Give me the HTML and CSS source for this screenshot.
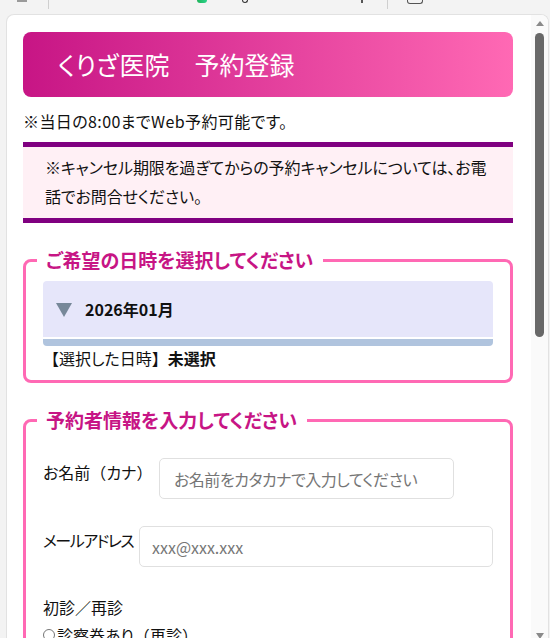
FILE: index.html
```html
<!DOCTYPE html>
<html lang="ja">
<head>
<meta charset="utf-8">
<title>くりざ医院 予約登録</title>
<link rel="stylesheet" href="styles.css">
</head>
<body>
<div class="chrome">
  <span class="frag frag-tab"></span>
  <span class="frag frag-sep1"></span>
  <span class="frag frag-dot"></span>
  <span class="frag frag-txt"></span>
  <span class="frag frag-tick"></span>
  <span class="frag frag-sep2"></span>
  <span class="frag frag-box"></span>
</div>
<div class="panel">
  <main class="content">
    <h1 class="title">くりざ医院　予約登録</h1>
    <p class="lead">※当日の8:00までWeb予約可能です。</p>
    <div class="notice">※キャンセル期限を過ぎてからの予約キャンセルについては、お電話でお問合せください。</div>

    <fieldset class="box">
      <legend>ご希望の日時を選択してください</legend>
      <div class="month"><span class="tri"></span><span class="month-label">2026年01月</span></div>
      <div class="month-foot"></div>
      <p class="selected"><span class="fw">【</span>選択した日時<span class="fw">】</span><strong>未選択</strong></p>
    </fieldset>

    <fieldset class="box">
      <legend>予約者情報を入力してください</legend>
      <div class="row row-name">
        <label class="lbl lbl-name" for="kana">お名前<span class="fw">（</span>カナ<span class="fw">）</span></label>
        <input class="inp inp-name" id="kana" type="text" placeholder="お名前をカタカナで入力してください">
      </div>
      <div class="row row-mail">
        <label class="lbl lbl-mail" for="mail">メールアドレス</label>
        <input class="inp inp-mail" id="mail" type="text" placeholder="xxx@xxx.xxx">
      </div>
      <p class="q">初診／再診</p>
      <label class="radio"><input type="radio" name="visit">診察券あり<span class="fw">（</span>再診<span class="fw">）</span></label>
    </fieldset>
  </main>
  <div class="scrollbar">
    <span class="sb-up"></span>
    <span class="sb-thumb"></span>
    <span class="sb-down"></span>
  </div>
</div>
</body>
</html>
```
FILE: styles.css
```css
html, body {
  margin: 0;
}
body {
  width: 550px;
  height: 638px;
  overflow: hidden;
  background: #f3f3f3;
  font-family: "Noto Sans CJK JP", "Noto Sans", sans-serif;
  font-feature-settings: "palt";
  color: #111;
}
.fw {
  font-feature-settings: normal;
}

/* browser chrome fragments */
.chrome {
  height: 14px;
  position: relative;
}
.frag {
  position: absolute;
  top: 0;
  display: block;
}
.frag-tab { left: 17px; width: 10px; height: 2px; background: #9a9a9a; }
.frag-sep1 { left: 48px; width: 1px; height: 9px; background: #cfcfcf; }
.frag-dot { left: 197px; width: 10px; height: 3px; border-radius: 0 0 5px 5px; background: linear-gradient(to right, #1fb35a, #2bd38a); }
.frag-txt { left: 242px; width: 6px; height: 3px; border-radius: 0 0 3px 3px; border: 1px solid #333; border-top: 0; box-sizing: border-box; }
.frag-tick { left: 361px; width: 2px; height: 3px; background: #555; }
.frag-sep2 { left: 387px; width: 1px; height: 9px; background: #cfcfcf; }
.frag-box { left: 407px; width: 16px; height: 4px; border: 1.5px solid #555; border-top: 0; border-radius: 0 0 3px 3px; box-sizing: border-box; }

.panel {
  margin-left: 6px;
  width: 543px;
  height: 624px;
  box-sizing: border-box;
  background: #fff;
  border: 1px solid #e2e2e2;
  border-bottom: 0;
  border-radius: 8px 8px 0 0;
  display: flex;
  overflow: hidden;
}
.content {
  flex: 1;
  min-width: 0;
  padding: 17px 18px 0 16px;
}

.title {
  margin: 0;
  height: 65px;
  box-sizing: border-box;
  padding-left: 35px;
  display: flex;
  align-items: center;
  border-radius: 8px;
  background: linear-gradient(to right, #c71585, #ff69b4);
  color: #fff;
  font-size: 25px;
  font-weight: 400;
  line-height: 1;
}
.lead {
  margin: 12px 0 9px;
  font-size: 16px;
  line-height: 24px;
  letter-spacing: 0.4px;
}
.notice {
  border-top: 5px solid #800080;
  border-bottom: 5px solid #800080;
  background: #fff0f5;
  padding: 6px 14px 7px 22px;
  font-size: 16px;
  line-height: 29px;
  letter-spacing: -0.1px;
}

.box {
  margin: 25px 0 0;
  min-width: 0;
  border: 3px solid #ff69b4;
  border-radius: 8px;
  padding: 9px 17px 10px;
}
.box legend {
  margin-left: -6px;
  padding: 0 10px 0 9px;
  color: #c71585;
  font-size: 19px;
  font-weight: 700;
  line-height: 24px;
}

.month {
  height: 56px;
  background: #e6e6fa;
  border-radius: 4px 4px 0 0;
  display: flex;
  align-items: center;
  padding-left: 13px;
}
.tri {
  width: 0;
  height: 0;
  border-left: 8px solid transparent;
  border-right: 8px solid transparent;
  border-top: 14px solid #778899;
  margin: 2px 13px 0 0;
}
.month-label {
  font-size: 16px;
  font-weight: 700;
}
.month-foot {
  height: 7px;
  margin-top: 2px;
  background: #b0c4de;
  border-radius: 0 0 4px 4px;
}
.selected {
  margin: 0;
  font-size: 16px;
  line-height: 24px;
}
.selected strong {
  font-weight: 700;
}

.row {
  display: flex;
  align-items: flex-start;
}
.row-name { margin-top: 17px; }
.row-mail { margin-top: 27px; }
.lbl {
  margin-top: 2px;
  font-size: 16px;
  line-height: 24px;
  white-space: nowrap;
}
.lbl-name { width: 101px; }
.lbl-mail { width: 90px; letter-spacing: -1.5px; }
.inp {
  height: 41px;
  box-sizing: border-box;
  border: 1px solid #e0e0e0;
  border-radius: 5px;
  padding: 0 14px;
  font-family: inherit;
  font-feature-settings: "palt";
  font-size: 16px;
  color: #111;
  background: #fff;
  outline: none;
}
.inp::placeholder {
  color: #767676;
}
.inp-name {
  margin-left: 15px;
  width: 295px;
  letter-spacing: -0.5px;
}
.inp-mail {
  margin-left: 6px;
  flex: 1;
  min-width: 0;
  padding-left: 12px;
}
.q {
  margin: 28px 0 0;
  font-size: 16px;
  line-height: 24px;
}
.radio {
  display: flex;
  align-items: center;
  margin-top: 4px;
  font-size: 16px;
  line-height: 24px;
}
.radio input {
  margin: 0 2px 0 0;
  width: 12px;
  height: 12px;
}

/* scrollbar */
.scrollbar {
  width: 17px;
  flex: none;
  background: #fafafa;
  display: flex;
  flex-direction: column;
  align-items: center;
}
.sb-up {
  margin-top: 6px;
  width: 0;
  height: 0;
  border-left: 4.5px solid transparent;
  border-right: 4.5px solid transparent;
  border-bottom: 5px solid #8a8a8a;
}
.sb-thumb {
  margin-top: 7px;
  width: 9px;
  height: 304px;
  border-radius: 5px;
  background: #686868;
}
.sb-down {
  margin-top: auto;
  margin-bottom: -1px;
  width: 0;
  height: 0;
  border-left: 4.5px solid transparent;
  border-right: 4.5px solid transparent;
  border-top: 6px solid #8a8a8a;
}
```
